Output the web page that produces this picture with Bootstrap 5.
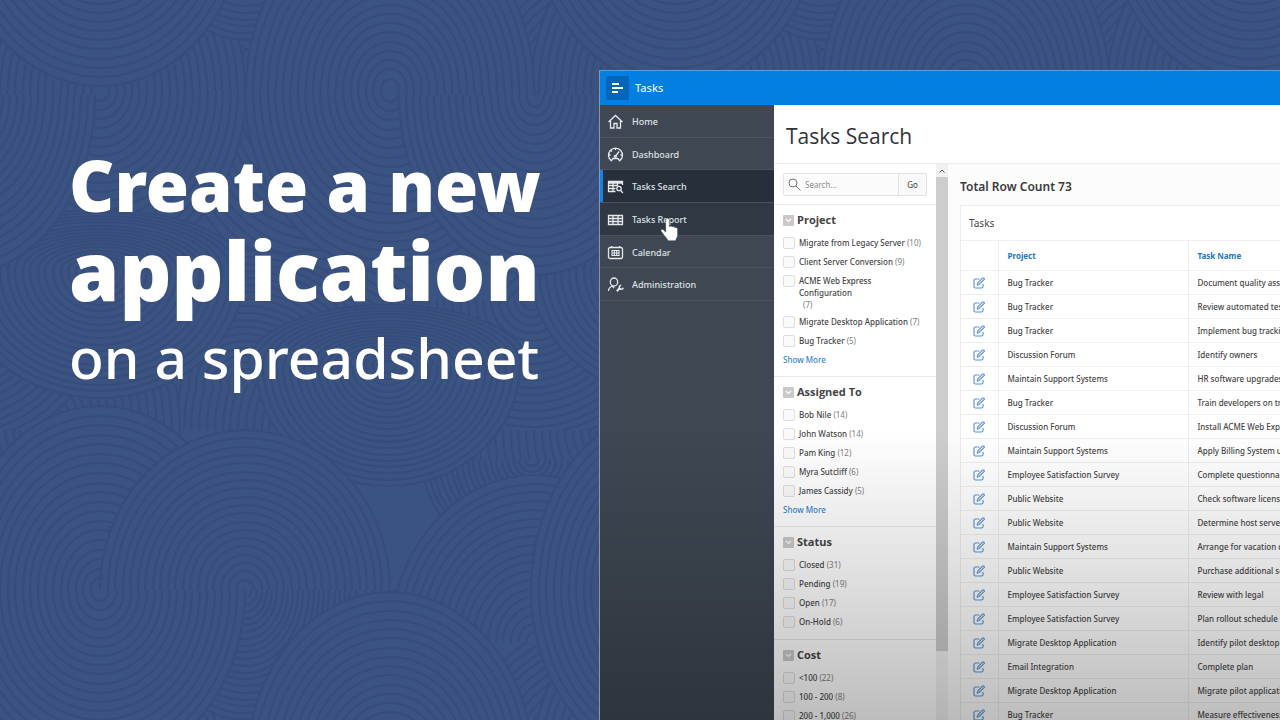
<!DOCTYPE html>
<html lang="en">
<head>
<meta charset="utf-8">
<meta name="viewport" content="width=device-width, initial-scale=1">
<title>Create a new application on a spreadsheet</title>
<link href="https://cdn.jsdelivr.net/npm/bootstrap@5.3.0/dist/css/bootstrap.min.css" rel="stylesheet">
<style>
  body { background: #3a5380; font-family: "Noto Sans", "Open Sans", sans-serif; color: #454545; }
  .stage { height: 100vh; }
  .swirls { top: 0; left: 0; z-index: 0; }
  .hero { flex: 0 0 599px; padding: 145px 0 0 69px; z-index: 1; }
  .hero-title { font-weight: 900; font-size: 70px; line-height: 80px; }
  .hero-big { font-size: 81px; line-height: 90px; }
  .hero-sub { font-weight: 500; font-size: 57px; line-height: 84px; }
  .app-frame { margin-top: 70px; background: #fff; border-left: 1px solid #8d96a6; z-index: 1; font-size: 8px; font-weight: 500; }
  .app-bar { height: 35px; background: #037fe2; border-top: 1px solid #4fa3e6; padding-left: 6px; gap: 6px; }
  .app-bar button { width: 23px; height: 24px; background: #0366b8; border-radius: 2px; }
  .app-name { font-size: 11px; color: #e4f1fc; }
  .side { flex: 0 0 174px; background: #3e4752; }
  .side ul { height: 196px; }
  .side a { color: #dfe3e7; font-size: 9px; border-bottom: 1px solid #4a535e; padding: 2px 0 0 7px; gap: 8px; }
  .side a.here { background: #262f3a; box-shadow: inset 3px 0 0 #1583e2; }
  .side a.over { background: #303943; }
  .side svg { width: 17px; height: 16px; fill: none; stroke: #e6e9ec; stroke-width: 1.3; }
  .page-title { font: 400 21px/54px "Open Sans", sans-serif; border-bottom: 1px solid #ededed; padding: 4px 0 0 12px; color: #303438; }
  .facets { flex: 0 0 162px; }
  .find { height: 41px; padding: 9px 9px 8px 9px; border-bottom: 1px solid #ebebeb; }
  .find .field { border: 1px solid #e2e2e2; background: #fbfbfb; border-radius: 2px 0 0 2px; }
  .find input { font-size: 8px; outline: 0; }
  .find input::placeholder { color: #8b8b8b; }
  .find .go { flex: 0 0 28px; font-size: 8px; border: 1px solid #e2e2e2; border-left: 0; background: #f9f9f9; border-radius: 0 2px 2px 0; color: #404040; }
  .facet { padding: 5px 9px 6px; border-bottom: 1px solid #e8e8e8; }
  .facet h3 { font: 700 11px/20px "Open Sans", sans-serif; margin-bottom: 3px; gap: 3px; color: #444; }
  .facet h3 button { width: 11px; height: 11px; background: #c9c9c9; border-radius: 1px; }
  .facet label { min-height: 19px; line-height: 12px; padding: 4px 0 3px; gap: 4px; }
  .facet label.tall { height: 41px; }
  .facet label small { font-size: 8px; color: #808080; font-weight: 400; }
  .facet label input { appearance: none; flex: none; width: 12px; height: 12px; margin: 0; border: 1px solid #dedede; border-radius: 2px; background: #fafafa; }
  .show-more { line-height: 20px; color: #3584cf; }
  .scroll { flex: 0 0 12px; background: #f1f1f1; }
  .scroll button { height: 13px; background: #f1f1f1; }
  .scroll .thumb { height: 474px; background: #cdcdcd; }
  .results { background: #fcfcfc; padding-left: 12px; }
  .total { font-weight: 600; font-size: 12px; line-height: 36px; padding-top: 5px; color: #3a3a3a; }
  .report { border: 1px solid #ececec; border-right: 0; background: #fff; }
  .report caption { caption-side: top; font-size: 10px; line-height: 34px; padding: 0 8px; color: #484848; font-weight: 400; }
  .report table { width: 580px; table-layout: fixed; margin: 0; }
  .report th, .report td { height: 24px; padding: 0 9px; border: 1px solid #efefef; border-width: 0 1px 1px 0; line-height: 12px; white-space: nowrap; }
  .report thead th { height: 30px; border-top-width: 1px; color: #1a76c8; font-weight: 700; }
  .report .c1 { width: 37px; }
  .report .c2 { width: 190px; }
  .report td:first-child { padding: 0; }
  .report svg { width: 12px; height: 12px; fill: none; stroke: #5b98d6; stroke-width: 1.2; }
  .fade-down { inset: auto 0 0 0; height: 290px; background: linear-gradient(rgba(0,0,0,0), rgba(0,0,0,.11) 45%, rgba(0,0,0,.26)); pointer-events: none; }
  .hand { left: 60px; top: 112px; }
  .side svg.hand { width: 19px; height: 26px; fill: #fff; stroke: #3a3f45; stroke-width: .5; }
</style>
</head>
<body>
<div class="stage position-relative d-flex overflow-hidden">
  <svg class="swirls position-absolute w-100 h-100" id="swirls" aria-hidden="true"></svg>

  <section class="hero position-relative text-white">
    <h1 class="hero-title m-0 text-nowrap">Create a new<span class="hero-big d-block">application</span></h1>
    <p class="hero-sub m-0 text-nowrap">on a spreadsheet</p>
  </section>

  <div class="app-frame position-relative flex-fill d-flex flex-column overflow-hidden">
    <header class="app-bar flex-shrink-0 d-flex align-items-center">
      <button class="btn p-0 border-0 d-flex align-items-center justify-content-center" type="button" aria-label="Menu">
        <svg width="13" height="12" viewBox="0 0 13 12" stroke="#fff" stroke-width="2"><path d="M1 2h7M1 6h11M1 10h6"/></svg>
      </button>
      <span class="app-name">Tasks</span>
    </header>

    <div class="d-flex flex-fill overflow-hidden">
      <nav class="side position-relative">
        <ul class="list-unstyled m-0 d-flex flex-column">
          <li class="flex-fill d-flex"><a href="#" class="w-100 d-flex align-items-center text-decoration-none">
            <svg viewBox="0 0 17 16"><path d="M1.500 8 8.500 1.500 15.500 8M3.500 6.500V14h3.500V9.500h3V14h3.500V6.500"/></svg>Home</a></li>
          <li class="flex-fill d-flex"><a href="#" class="w-100 d-flex align-items-center text-decoration-none">
            <svg viewBox="0 0 17 16"><path d="M4.300 13.800a7 7 0 1 1 8.400 0l-1.700-2.300H6zM8.800 8.800l3.200-4.300M8.500 1.500v1.500M1.700 8H3.500M13.500 8h1.700M4 3.500l1 1"/><circle cx="8.300" cy="9.300" r="1"/></svg>Dashboard</a></li>
          <li class="flex-fill d-flex"><a href="#" class="here w-100 d-flex align-items-center text-decoration-none">
            <svg viewBox="0 0 17 16"><path d="M8.500 12.500H1.500v-10h14V6M1.500 4h14M1.500 6.500h9M1.500 9.500h7M6 3v9.500M10.500 3v4"/><circle cx="12" cy="9.500" r="2.200"/><path d="m13.500 11.200 2.300 2.800"/></svg>Tasks Search</a></li>
          <li class="flex-fill d-flex"><a href="#" class="over w-100 d-flex align-items-center text-decoration-none">
            <svg viewBox="0 0 17 16"><path d="M1.500 3.500h14v9h-14zM1.500 6.500h14M1.500 9.500h14M6 3.500v9M11 3.500v9"/></svg>Tasks Report</a></li>
          <li class="flex-fill d-flex"><a href="#" class="w-100 d-flex align-items-center text-decoration-none">
            <svg viewBox="0 0 17 16"><path d="M3 2.500h11a1.500 1.500 0 0 1 1.500 1.500v8A1.500 1.500 0 0 1 14 13.500H3a1.500 1.500 0 0 1-1.500-1.500V4A1.500 1.500 0 0 1 3 2.500zM4.500 1v2M12.500 1v2"/><path d="M5 5.500h7v5H5zM5 8h7M7.300 5.500v5M9.700 5.500v5" stroke-width="1.100"/></svg>Calendar</a></li>
          <li class="flex-fill d-flex"><a href="#" class="w-100 d-flex align-items-center text-decoration-none">
            <svg viewBox="0 0 17 16"><ellipse cx="7" cy="5" rx="3.700" ry="4"/><path d="M1.500 14c0-3 1.500-4 4-5l1.500 2"/><path d="m9.800 14.200 3.400-3.400" stroke-width="2.200"/><path d="M14.200 8.300a2 2 0 1 0 2 2.500" stroke-width="1.500"/></svg>Administration</a></li>
        </ul>
        <svg class="hand position-absolute" viewBox="0 0 17 24" aria-hidden="true"><path d="M5 2.500a1.700 1.700 0 0 1 3.300 0V9c.6-1 2.400-.8 2.700.3.700-.8 2.200-.5 2.500.6 1-.6 2.500.1 2.500 1.400v5c0 2.500-1.500 3.500-1.800 5.700H7c-.3-2-2.500-3.300-4-5.800l-2.200-3c-.7-1.400 1-2.500 2.200-1.300l2 2z"/></svg>
      </nav>

      <main class="flex-fill d-flex flex-column overflow-hidden">
        <h2 class="page-title m-0 flex-shrink-0">Tasks Search</h2>
        <div class="d-flex flex-fill overflow-hidden">
          <aside class="facets overflow-hidden">
            <form class="find d-flex" onsubmit="return false">
              <div class="field flex-fill d-flex align-items-center overflow-hidden">
                <svg class="flex-shrink-0 ms-1" width="13" height="13" viewBox="0 0 13 13" fill="none" stroke="#777"><circle cx="5" cy="5" r="4"/><path d="m8 8 4.500 4.500"/></svg>
                <input class="border-0 bg-transparent w-100 p-0 ms-1" type="search" placeholder="Search..." aria-label="Search">
              </div>
              <button class="go p-0" type="submit">Go</button>
            </form>
            <div id="facets"></div>
          </aside>
          <div class="scroll d-flex flex-column">
            <button class="border-0 p-0 d-flex align-items-center justify-content-center" type="button" aria-label="Scroll up"><svg width="6" height="4" viewBox="0 0 6 4" fill="none" stroke="#555"><path d="m.5 3.500 2.500-2.500 2.500 2.500"/></svg></button>
            <div class="thumb"></div>
          </div>
          <section class="results flex-fill overflow-hidden">
            <div class="total">Total Row Count 73</div>
            <div class="report overflow-hidden">
              <table>
                <caption>Tasks</caption>
                <thead><tr><th class="c1" aria-label="Edit"></th><th class="c2">Project</th><th>Task Name</th></tr></thead>
                <tbody id="rows"></tbody>
              </table>
            </div>
          </section>
        </div>
      </main>
    </div>
    <div class="fade-down position-absolute"></div>
  </div>
</div>

<script src="https://cdn.jsdelivr.net/npm/bootstrap@5.3.0/dist/js/bootstrap.bundle.min.js"></script>
<script>
  const facets = [
    ["Project", [["Migrate from Legacy Server", 10], ["Client Server Conversion", 9], ["ACME Web Express Configuration", 7], ["Migrate Desktop Application", 7], ["Bug Tracker", 5]], true],
    ["Assigned To", [["Bob Nile", 14], ["John Watson", 14], ["Pam King", 12], ["Myra Sutcliff", 6], ["James Cassidy", 5]], true],
    ["Status", [["Closed", 31], ["Pending", 19], ["Open", 17], ["On-Hold", 6]], false],
    ["Cost", [["&lt;100", 22], ["100 - 200", 8], ["200 - 1,000", 26]], false]
  ];
  document.getElementById("facets").innerHTML = facets.map(([name, items, more]) => `
    <section class="facet${more ? "" : " pb-2"}">
      <h3 class="d-flex align-items-center"><button class="border-0 p-0 d-flex align-items-center justify-content-center" type="button" aria-label="Collapse ${name}"><svg width="7" height="5" viewBox="0 0 7 5" fill="none" stroke="#fff" stroke-width="1.200"><path d="m1 1 2.500 2.500L6 1"/></svg></button>${name}</h3>
      ${items.map(([t, n]) => {
        const wrap = t.startsWith("ACME");
        const text = wrap ? t.replace("Express ", "Express<br>") + `<br><small class="ms-1">(${n})</small>` : `${t} <small>(${n})</small>`;
        return `<label class="d-flex text-nowrap${wrap ? " tall" : ""}"><input type="checkbox"><span>${text}</span></label>`;
      }).join("")}
      ${more ? '<a href="#" class="show-more d-block text-decoration-none">Show More</a>' : ""}
    </section>`).join("");

  const tasks = [
    ["Bug Tracker", "Document quality assurance plan"], ["Bug Tracker", "Review automated testing tools"], ["Bug Tracker", "Implement bug tracking software"],
    ["Discussion Forum", "Identify owners"], ["Maintain Support Systems", "HR software upgrades"], ["Bug Tracker", "Train developers on tracking bugs"],
    ["Discussion Forum", "Install ACME Web Express"], ["Maintain Support Systems", "Apply Billing System updates"], ["Employee Satisfaction Survey", "Complete questionnaire"],
    ["Public Website", "Check software licenses"], ["Public Website", "Determine host server"], ["Maintain Support Systems", "Arrange for vacation coverage"],
    ["Public Website", "Purchase additional software"], ["Employee Satisfaction Survey", "Review with legal"], ["Employee Satisfaction Survey", "Plan rollout schedule"],
    ["Migrate Desktop Application", "Identify pilot desktop applications"], ["Email Integration", "Complete plan"], ["Migrate Desktop Application", "Migrate pilot applications"],
    ["Bug Tracker", "Measure effectiveness"]
  ];
  document.getElementById("rows").innerHTML = tasks.map(([p, t]) => `<tr><td><a href="#" class="d-flex justify-content-center" aria-label="Edit"><svg viewBox="0 0 12 12"><path d="M6.500 2H2.500A1.500 1.500 0 0 0 1 3.500v6A1.500 1.500 0 0 0 2.500 11h6A1.500 1.500 0 0 0 10 9.500V7"/><path d="M4.300 8 4.800 6 9.500 1.200a1 1 0 0 1 1.500 1.500L6.200 7.500z"/></svg></a></td><td>${p}</td><td>${t}</td></tr>`).join("");

  // Background: one repeating tile of overlapping half swirls, painted back to front.
  // Each entry is centre x, centre y, radius x, radius y, half (u = upper, d = lower).
  const W = 576, H = 680;
  const swirls = [
    [318, 90, 150, 190, "u"], [318, 90, 150, 190, "d"], [318, 430, 150, 180, "u"], [606, 430, 150, 190, "u"],
    [532, 300, 150, 150, "d"], [606, 90, 150, 150, "u"], [30, 430, 150, 190, "d"],
    [532, 460, 110, 100, "d"], [318, 590, 145, 160, "d"], [100, 90, 145, 175, "u"],
    [100, 90, 146, 175, "d"], [390, 90, 145, 180, "d"], [245, 590, 100, 130, "d"],
    [245, 385, 150, 135, "u"], [100, 270, 145, 60, "u"], [100, 270, 145, 128, "d"],
    [388, 365, 140, 60, "u"], [535, 643, 145, 168, "u"], [388, 365, 132, 121, "d"],
    [100, 590, 145, 184, "u"], [390, 90, 144, 178, "u"], [535, 95, 136, 180, "d"],
    [245, 590, 145, 160, "u"], [100, 590, 145, 176, "d"]
  ];
  let art = "";
  for (const [cx, cy, rx, ry, half] of swirls)
    for (const ox of [-W, 0, W]) for (const oy of [-H, 0, H]) {
      const x = cx + ox, y = cy + oy;
      if (x + rx < 0 || x - rx > W || y + ry < 0 || y - ry > H) continue;
      const sweep = half === "u" ? 1 : 0;
      for (let k = 1; k > 0.03; k -= 0.052) {
        const a = Math.round(rx * k), b = Math.round(ry * k);
        art += `<path d="M${x - a} ${y}A${a} ${b} 0 0 ${sweep} ${x + a} ${y}"/>`;
      }
    }
  document.getElementById("swirls").innerHTML = `<defs><pattern id="tile" width="${W}" height="${H}" patternUnits="userSpaceOnUse"><g fill="#3a5380" stroke="#364c7a" stroke-width="2.200">${art}</g></pattern></defs><rect width="100%" height="100%" fill="#3a5380"/><rect width="100%" height="100%" fill="url(#tile)"/>`;
</script>
</body>
</html>
